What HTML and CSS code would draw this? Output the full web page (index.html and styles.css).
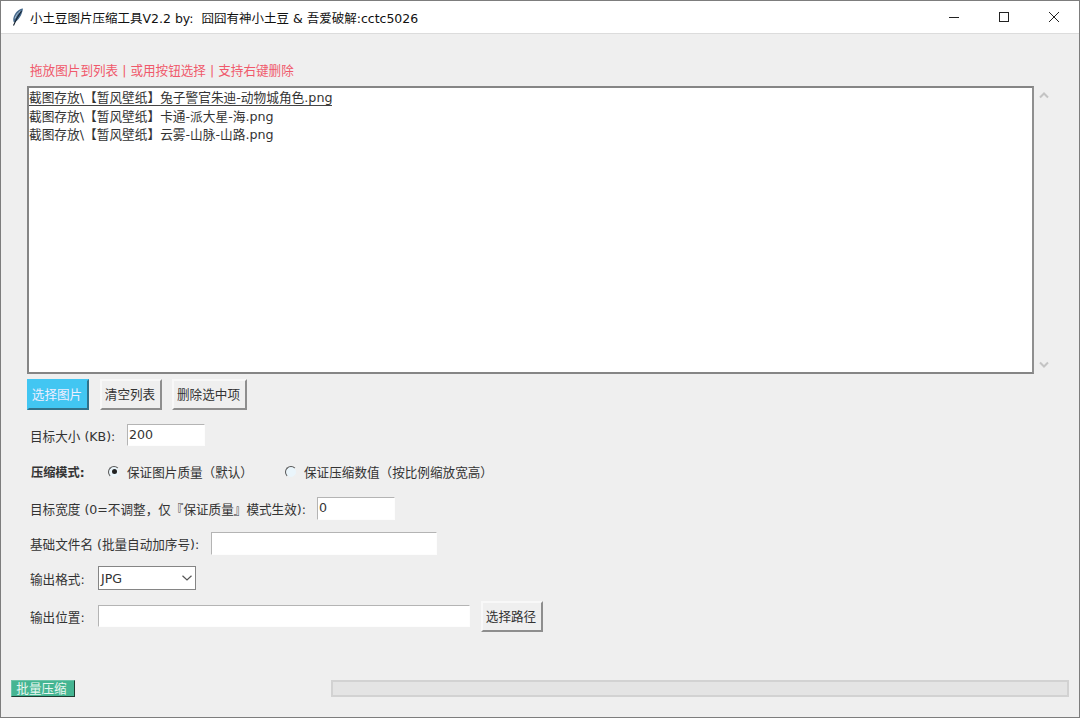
FILE: index.html
```html
<!DOCTYPE html>
<html lang="zh">
<head>
<meta charset="utf-8">
<title>小土豆图片压缩工具</title>
<link rel="stylesheet" href="styles.css">
</head>
<body>
<div class="window">
  <header class="titlebar">
    <svg class="app-icon" width="12" height="18" viewBox="0 0 12 18"><path d="M11 .5C6.500 1 2 5.500 1.300 10.500c-.2 1.600 0 3 .7 3.900C6.500 13 10 7 11 .5z" fill="#45698c"/><path d="M9.500 3C7 6.500 4 11 1.500 17.500" stroke="#16222e" stroke-width="1.100" fill="none"/><path d="M8.500 3C6.500 4.500 4 7 3 10.500" stroke="#b4c7d8" stroke-width=".9" fill="none"/></svg>
    <span class="title">小土豆图片压缩工具V2.2 by:&nbsp; 囧囧有神小土豆 &amp; 吾爱破解:cctc5026</span>
    <div class="controls">
      <div class="ctl"><svg width="12" height="12" viewBox="0 0 12 12"><path d="M1 6.500h10" stroke="#222" fill="none"/></svg></div>
      <div class="ctl"><svg width="12" height="12" viewBox="0 0 12 12"><rect x="1.500" y="1.500" width="9" height="9" stroke="#222" fill="none"/></svg></div>
      <div class="ctl"><svg width="12" height="12" viewBox="0 0 12 12"><path d="M1 1l10 10M11 1L1 11" stroke="#222" fill="none"/></svg></div>
    </div>
  </header>
  <main class="main">
    <div class="content">
      <p class="hint">拖放图片到列表 | 或用按钮选择 | 支持右键删除</p>
      <div class="list-wrap">
        <div class="listbox">
          <div class="item active">截图存放\【暂风壁纸】兔子警官朱迪-动物城角色.png</div>
          <div class="item">截图存放\【暂风壁纸】卡通-派大星-海.png</div>
          <div class="item">截图存放\【暂风壁纸】云雾-山脉-山路.png</div>
        </div>
        <div class="scrollbar">
          <svg width="10" height="7" viewBox="0 0 10 7"><path d="M1 5.500l4-4 4 4" stroke="#c4c4c4" stroke-width="2" fill="none"/></svg>
          <svg width="10" height="7" viewBox="0 0 10 7"><path d="M1 1.500l4 4 4-4" stroke="#c4c4c4" stroke-width="2" fill="none"/></svg>
        </div>
      </div>
      <div class="btn-row">
        <button class="btn btn-blue">选择图片</button>
        <button class="btn">清空列表</button>
        <button class="btn btn-wide">删除选中项</button>
      </div>
      <div class="row row-size">
        <label class="lbl lbl-size">目标大小 (KB):</label>
        <div class="field field-s">200</div>
      </div>
      <div class="row row-mode">
        <label class="lbl lbl-mode">压缩模式:</label>
        <span class="radio on"></span><span class="radio-text radio-text-a">保证图片质量（默认）</span>
        <span class="radio"></span><span class="radio-text">保证压缩数值（按比例缩放宽高）</span>
      </div>
      <div class="row row-width">
        <label class="lbl lbl-width">目标宽度 (0=不调整，仅『保证质量』模式生效):</label>
        <div class="field field-s field-tall">0</div>
      </div>
      <div class="row row-name">
        <label class="lbl lbl-name">基础文件名 (批量自动加序号):</label>
        <div class="field field-m field-tall"></div>
      </div>
      <div class="row row-format">
        <label class="lbl lbl-short">输出格式:</label>
        <div class="combo"><span>JPG</span><svg width="10" height="6" viewBox="0 0 10 6"><path d="M.5.800L5 5 9.500.800" stroke="#555" stroke-width="1.200" fill="none"/></svg></div>
      </div>
      <div class="row row-path">
        <label class="lbl lbl-short">输出位置:</label>
        <div class="field field-l"></div>
        <button class="btn btn-path">选择路径</button>
      </div>
    </div>
    <div class="bottom">
      <button class="btn-go">批量压缩</button>
      <div class="progress"></div>
    </div>
  </main>
</div>
</body>
</html>
```
FILE: styles.css
```css
* { box-sizing: border-box; }
html, body { margin: 0; height: 100%; }
body {
  font-family: "DejaVu Sans", "Noto Sans CJK SC", sans-serif;
  font-size: 12.600px;
  color: #333;
  background: #efefef;
}
.window {
  width: 1080px;
  height: 718px;
  border: 1px solid #7d7d7d;
  display: flex;
  flex-direction: column;
}
.titlebar {
  height: 33px;
  flex: none;
  background: #fff;
  border-bottom: 1px solid #dcdcdc;
  display: flex;
  align-items: center;
  padding-left: 11px;
}
.app-icon { flex: none; }
.title {
  margin-left: 6px;
  font-size: 12.500px;
  color: #111;
  white-space: pre;
}
.controls { margin-left: auto; display: flex; height: 32px; }
.ctl { width: 50px; display: flex; align-items: center; justify-content: center; }

.main {
  flex: 1;
  display: flex;
  flex-direction: column;
  padding: 28px 10px 20px 10px;
}
.content { padding-left: 16px; }
.hint {
  margin: 0 0 6px;
  height: 18px;
  line-height: 18px;
  padding-left: 3px;
  color: #f0596b;
}
.list-wrap { display: flex; height: 288px; }
.listbox {
  width: 1007px;
  background: #fff;
  border: 2px solid #858585;
  border-right-color: #8f8f8f;
  padding-top: 2px;
  font-size: 12.700px;
}
.item {
  height: 18.500px;
  line-height: 16px;
  color: #333;
  white-space: nowrap;
}
.item.active {
  width: fit-content;
  height: 16px;
  margin-bottom: 2.500px;
  border-bottom: 1px solid #444;
}
.scrollbar {
  width: 20px;
  padding: 6px 0 6px;
  display: flex;
  flex-direction: column;
  justify-content: space-between;
  align-items: center;
}
.btn-row { display: flex; gap: 10px; margin-top: 5px; }
.btn {
  width: 62px;
  height: 31px;
  padding: 0 2px 2px 0;
  font: inherit;
  color: #333;
  background: #efefef;
  border: 2px solid;
  border-color: #f8f8f8 #8e8e8e #8e8e8e #f8f8f8;
  white-space: nowrap;
}
.btn-blue {
  background: #42c6f2;
  color: #eef;
  border-color: #42c6f2 #31718a #31718a #42c6f2;
  margin-right: 1px;
}
.btn-wide { width: 75px; }
.btn-path { margin-left: 11px; }

.row { display: flex; align-items: center; }
.row-size { margin-top: 14px; height: 22px; }
.row-mode { margin-top: 16px; height: 19px; }
.row-width { margin-top: 16px; height: 23px; }
.row-name { margin-top: 12px; height: 23px; }
.row-format { margin-top: 11px; height: 24px; }
.row-path { margin-top: 11px; height: 31px; }
.lbl { flex: none; padding-left: 3px; white-space: nowrap; color: #333; }
.lbl-size { width: 100px; }
.lbl-mode { width: 81px; font-weight: 700; font-size: 12.200px; padding-left: 4px; }
.lbl-width { width: 290px; }
.lbl-name { width: 184px; }
.lbl-short { width: 71px; }
.field {
  flex: none;
  height: 22px;
  line-height: 20px;
  background: #fff;
  border: 1px solid;
  border-color: #b4b4b4 #fdfdfd #fdfdfd #b4b4b4;
  padding-left: 1px;
  color: #333;
}
.field-tall { height: 23px; }
.field-s { width: 78px; }
.field-m { width: 226px; }
.field-l { width: 372px; margin-bottom: 1px; }
.radio {
  flex: none;
  width: 12px;
  height: 12px;
  border-radius: 50%;
  background: #eaf5fb;
  border: 1.500px solid;
  border-color: #555 #efefef #efefef #555;
  margin-right: 7px;
  display: flex;
  align-items: center;
  justify-content: center;
}
.radio.on::after {
  content: "";
  width: 5px;
  height: 5px;
  border-radius: 50%;
  background: #222;
}
.radio-text { white-space: nowrap; }
.radio-text-a { width: 158px; }
.combo {
  width: 98px;
  height: 24px;
  background: #fff;
  border: 1px solid #858585;
  display: flex;
  align-items: center;
  justify-content: space-between;
  padding: 0 3px 0 2px;
}
.bottom { margin-top: auto; display: flex; height: 17px; }
.btn-go {
  width: 64px;
  height: 17px;
  padding: 0 3px 0 0;
  font: inherit;
  line-height: 13px;
  color: #e8f6f0;
  background: #45b592;
  border: 1px solid;
  border-color: #6cc4a8 #1f3a30 #1f3a30 #6cc4a8;
  white-space: nowrap;
}
.progress {
  margin-left: 256px;
  width: 738px;
  height: 17px;
  background: #e4e4e4;
  border: 2px solid #d2d2d2;
}
```
